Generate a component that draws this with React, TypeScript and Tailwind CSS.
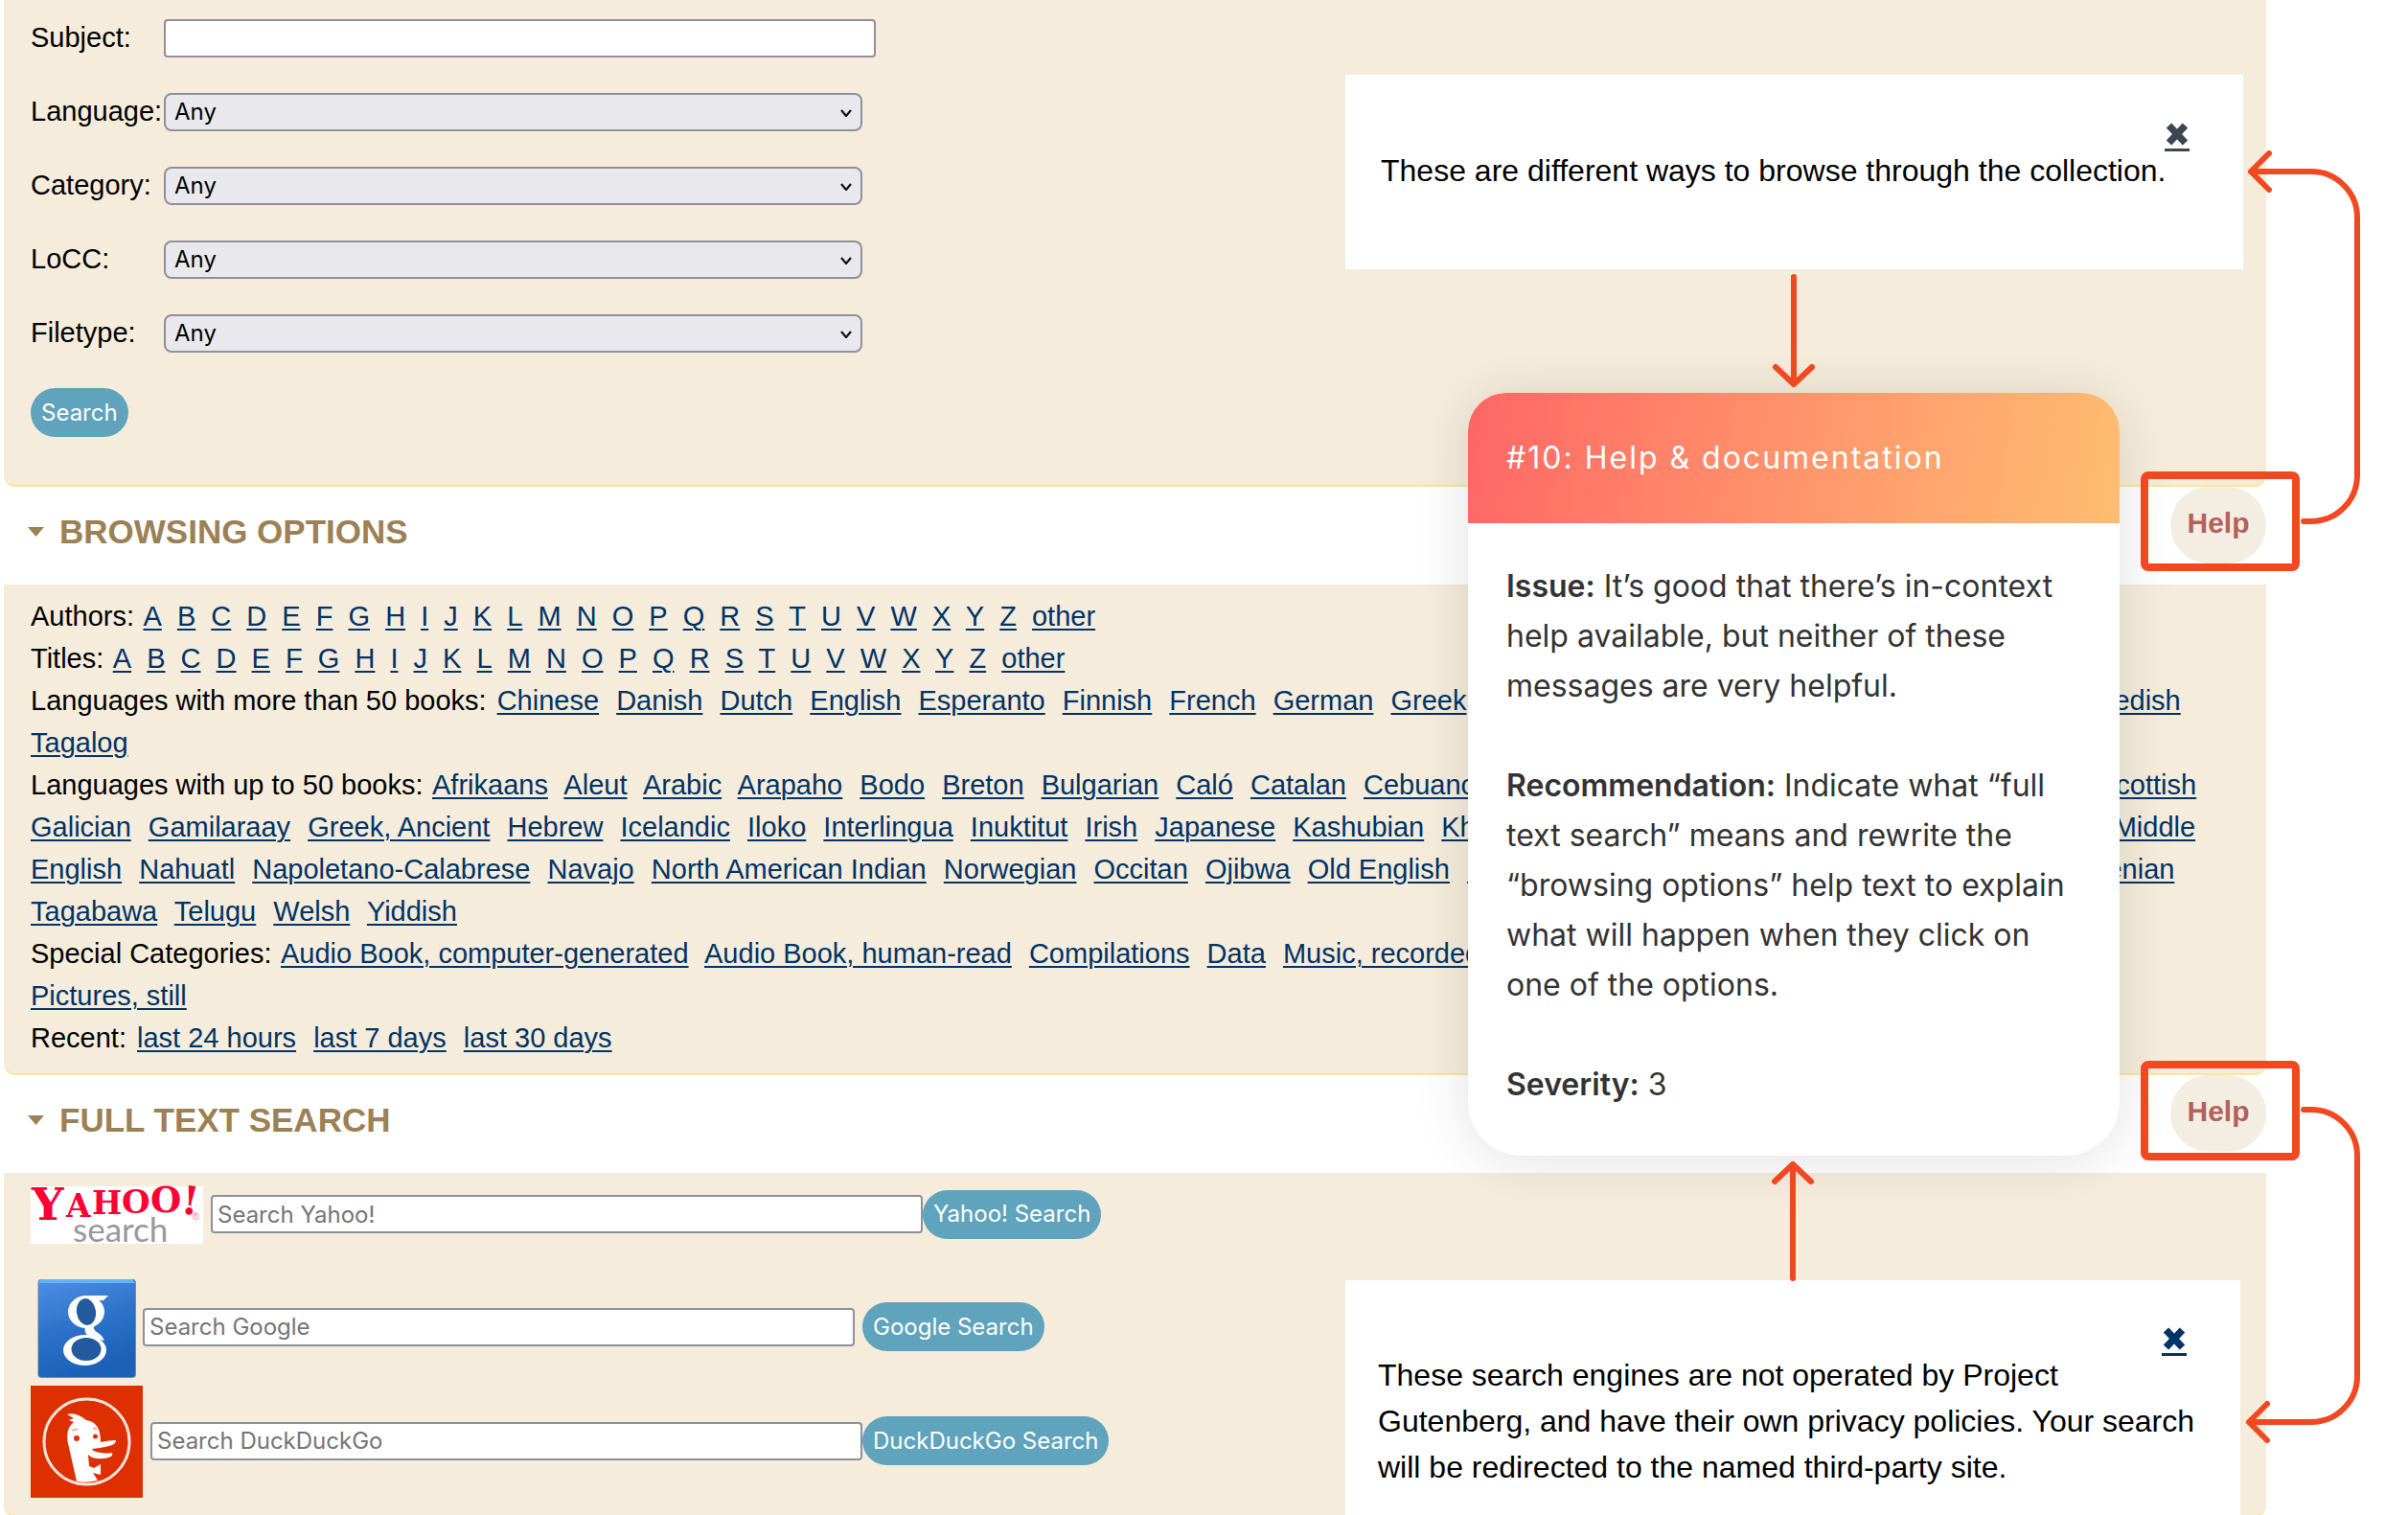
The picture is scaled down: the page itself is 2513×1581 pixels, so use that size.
import React from "react";

const FORM_FIELDS = ["Language", "Category", "LoCC", "Filetype"];
const LETTERS = [..."ABCDEFGHIJKLMNOPQRSTUVWXYZ", "other"];

const BROWSE_ROWS: { label: string; spacing: string; items: string[] }[] = [
  { label: "Authors:", spacing: "mr-2", items: LETTERS },
  { label: "Titles:", spacing: "mr-2", items: LETTERS },
  {
    label: "Languages with more than 50 books:",
    spacing: "mr-[10px]",
    items: ["Chinese", "Danish", "Dutch", "English", "Esperanto", "Finnish", "French", "German", "Greek", "Hungarian", "Italian", "Latin", "Portuguese", "Spanish", "Swedish", "Tagalog"],
  },
  {
    label: "Languages with up to 50 books:",
    spacing: "mr-[10px]",
    items: [
      "Afrikaans", "Aleut", "Arabic", "Arapaho", "Bodo", "Breton", "Bulgarian", "Caló", "Catalan", "Cebuano", "Czech", "Estonian", "Farsi", "Frisian", "Friulian", "Gaelic, Scottish",
      "Galician", "Gamilaraay", "Greek, Ancient", "Hebrew", "Icelandic", "Iloko", "Interlingua", "Inuktitut", "Irish", "Japanese", "Kashubian", "Khasi", "Korean", "Lithuanian", "Maori", "Mayan Languages", "Middle English",
      "Nahuatl", "Napoletano-Calabrese", "Navajo", "North American Indian", "Norwegian", "Occitan", "Ojibwa", "Old English", "Polish", "Romanian", "Russian", "Sanskrit", "Serbian", "Slovenian",
      "Tagabawa", "Telugu", "Welsh", "Yiddish",
    ],
  },
  {
    label: "Special Categories:",
    spacing: "mr-[10px]",
    items: ["Audio Book, computer-generated", "Audio Book, human-read", "Compilations", "Data", "Music, recorded", "Music, sheet", "Other recordings", "Pictures, moving", "Pictures,\u00a0still"],
  },
  { label: "Recent:", spacing: "mr-[10px]", items: ["last 24 hours", "last 7 days", "last 30 days"] },
];

function PillButton({ children }: { children: React.ReactNode }) {
  return (
    <button type="submit" className="block h-[51px] shrink-0 rounded-full bg-[#60a3bc] px-[11px] font-[Inter,sans-serif] text-2xl text-white">
      {children}
    </button>
  );
}

function SectionHeader({ title }: { title: string }) {
  return (
    <div className="flex h-[102px] items-center pl-[25px]">
      <div className="flex items-center pb-2">
        <svg className="mr-4 h-[10px] w-[17px]" viewBox="0 0 17 10" aria-hidden="true">
          <path d="M0 0h17L8.500 10z" fill="#9c8154" />
        </svg>
        <h2 className="text-[35px] leading-10 font-bold text-[#9c8154]">{title}</h2>
      </div>
      <button type="button" className="ml-auto h-20 w-[100px] self-start rounded-[40px] bg-[#f4ede1] pb-[6px] text-[30px] font-bold text-[#b5615b]">
        Help
      </button>
    </div>
  );
}

function YahooLogo() {
  return (
    <svg className="h-[60px] w-[180px] shrink-0 overflow-visible bg-white" viewBox="0 0 180 60" role="img" aria-label="Yahoo! Search">
      <g fontFamily="DejaVu Serif, serif" fontWeight="bold" fill="#ff0033">
        <text x="1" y="35" fontSize="47">Y</text>
        <text x="37" y="32" fontSize="33">A</text>
        <text x="64" y="29" fontSize="33">H</text>
        <text x="95" y="28" fontSize="34">O</text>
        <text x="125" y="27" fontSize="37">O</text>
        <text x="157" y="29" fontSize="41" transform="rotate(7 164 20)">!</text>
      </g>
      <text x="168" y="35" fontSize="11" fill="#ff8090" fontFamily="Liberation Sans, sans-serif">®</text>
      <text x="44" y="58" fontSize="35" fill="#999" fontFamily="Lato, sans-serif">search</text>
    </svg>
  );
}

function GoogleLogo() {
  return (
    <svg className="h-[117px] w-[117px] shrink-0" viewBox="0 0 117 117" role="img" aria-label="Google">
      <defs>
        <linearGradient id="tile" x1="0" y1="0" x2="0.300" y2="1">
          <stop offset="0" stopColor="#4f8fe6" />
          <stop offset="0.500" stopColor="#2f74cc" />
          <stop offset="1" stopColor="#1c61b8" />
        </linearGradient>
      </defs>
      <rect x="7.500" y="8" width="102.500" height="103" rx="4" fill="#7f8b96" />
      <rect x="8" y="8" width="101" height="102" rx="3" fill="url(#tile)" />
      <path d="M11 8h95l3 4H8z" fill="#62b4f5" />
      <g fill="#fff">
        <ellipse cx="58" cy="42" rx="19" ry="17" />
        <path d="M60 25h21l-5 5h-8z" />
        <path d="M57 56c-1 6 0 9 4 12l16 4c-3-9-13-9-11-15z" />
        <ellipse cx="56.500" cy="82" rx="22.500" ry="16" />
      </g>
      <g fill="#235a9e">
        <ellipse cx="58" cy="42" rx="10" ry="14" transform="rotate(-8 58 42)" />
        <ellipse cx="58" cy="81" rx="15.500" ry="12" />
      </g>
    </svg>
  );
}

function DuckLogo() {
  return (
    <svg className="h-[117px] w-[117px] shrink-0" viewBox="0 0 117 117" role="img" aria-label="DuckDuckGo">
      <rect width="117" height="117" fill="#de2f00" />
      <circle cx="58.500" cy="58.500" r="44.500" fill="none" stroke="#fde5de" strokeWidth="3" />
      <path
        d="M38 30q9-3 20 6 7 1 10 5 5 5 5 18 9-2 16-2 0 2-2 4-5 3-23 5 1 3 10 4 6 1 11 0 1 2-1 4-9 4-20 1l-4-3 1 12 5 2 7-4v11l-8-2 5 8q-12 3-22 1L38.500 58q-1.500-13 4.500-18l2-2-5-2 5-2z"
        fill="#fff"
      />
      <circle cx="48" cy="55" r="3" fill="#de2f00" />
      <circle cx="67.500" cy="53" r="2.500" fill="#de2f00" />
      <path d="M43 47q3-2 6-1M65 45q2-1 4 0" fill="none" stroke="#f0a088" strokeWidth="1.500" />
    </svg>
  );
}

const ENGINES = [
  { name: "Yahoo!", logo: <YahooLogo />, row: "h-[74px] mb-[22px] gap-2", gap: "" },
  { name: "Google", logo: <GoogleLogo />, row: "h-[117px] mb-[2px]", gap: "ml-2" },
  { name: "DuckDuckGo", logo: <DuckLogo />, row: "h-[117px] gap-2", gap: "" },
];

function Popup({ className, closeClass, children }: { className: string; closeClass: string; children: React.ReactNode }) {
  return (
    <div role="note" className={`absolute bg-white text-[32px] leading-12 ${className}`}>
      <div className="flex h-[26px] items-start justify-end">
        <a href="#close" aria-label="Close" className={`w-[26px] border-b-[3px] pb-[3px] ${closeClass}`}>
          <svg className="h-6 w-[26px]" viewBox="0 0 26 24" aria-hidden="true">
            <path d="M4.500 3l17 18M21.500 3l-17 18" stroke="currentColor" strokeWidth="7.500" />
          </svg>
        </a>
      </div>
      <p>{children}</p>
    </div>
  );
}

const ARROW = "pointer-events-none absolute overflow-visible fill-none stroke-[#f24822] stroke-[6] [stroke-linecap:round] [stroke-linejoin:round]";

export default function App() {
  return (
    <div className="relative h-screen overflow-hidden bg-white font-['Liberation_Sans',Arial,sans-serif] text-[29px] text-black">
      <main className="mr-[148px] ml-1">
        <form className="rounded-b-xl border-b-2 border-[#f9e79b] bg-[#f5ecdb] pt-5 pb-[50px] pl-7" onSubmit={(e) => e.preventDefault()}>
          <div className="mb-[37px] flex h-10 items-center">
            <label htmlFor="subject" className="w-[139px] shrink-0">Subject:</label>
            <input id="subject" type="text" className="h-10 w-[743px] rounded border-2 border-[#8f8f9d] bg-white" />
          </div>
          {FORM_FIELDS.map((f) => (
            <div key={f} className="mb-[37px] flex h-10 items-center">
              <label htmlFor={f} className="w-[139px] shrink-0">{f}:</label>
              <div className="relative">
                <select id={f} className="block h-10 w-[729px] appearance-none rounded-lg border-2 border-[#8f8f9d] bg-[#e9e9ed] px-[9px] font-[Inter,sans-serif] text-2xl">
                  <option>Any</option>
                </select>
                <svg className="pointer-events-none absolute top-[17px] right-[11px] h-2 w-3" viewBox="0 0 12 8" aria-hidden="true">
                  <path d="M1 1l5 6 5-6" fill="none" stroke="#111" strokeWidth="2.200" />
                </svg>
              </div>
            </div>
          ))}
          <PillButton>Search</PillButton>
        </form>

        <SectionHeader title="BROWSING OPTIONS" />
        <section className="rounded-b-xl border-b-2 border-[#f9e79b] bg-[#f5ecdb] pt-[11px] pr-7 pb-[15px] pl-7 leading-11">
          {BROWSE_ROWS.map((row) => (
            <p key={row.label}>
              <span className="mr-[3px]">{row.label}</span>{" "}
              {row.items.map((item) => (
                <React.Fragment key={item}>
                  <a href="#browse" className={`${row.spacing} text-[#003366] underline decoration-2 underline-offset-3`}>{item}</a>{" "}
                </React.Fragment>
              ))}
            </p>
          ))}
        </section>

        <SectionHeader title="FULL TEXT SEARCH" />
        <section className="rounded-b-xl border-b-2 border-[#f9e79b] bg-[#f5ecdb] pt-[7px] pb-[18px] pl-7">
          {ENGINES.map((e) => (
            <form key={e.name} className={`flex items-center ${e.row}`} onSubmit={(ev) => ev.preventDefault()}>
              {e.logo}
              <div className="flex items-center pb-[2px]">
                <input
                  type="text"
                  aria-label={`Search ${e.name}`}
                  placeholder={`Search ${e.name}`}
                  className="h-10 w-[743px] rounded border-2 border-[#8f8f9d] bg-white px-[5px] font-[Inter,sans-serif] text-2xl placeholder:text-[#757575]"
                />
                <div className={e.gap}>
                  <PillButton>{e.name} Search</PillButton>
                </div>
              </div>
            </form>
          ))}
        </section>
      </main>

      <Popup className="top-[78px] right-[172px] h-[203px] w-[937px] px-[37px] pt-[50px]" closeClass="mr-[19px] text-[#3b4650]">
        These are different ways to browse through the collection.
      </Popup>
      <Popup className="top-[1336px] right-[175px] h-[260px] w-[934px] px-[34px] pt-[49px]" closeClass="mr-[22px] text-[#003366]">
        These search engines are not operated by Project Gutenberg, and have their own privacy policies. Your search will be redirected to the named third-party site.
      </Popup>

      <article className="absolute top-[410px] right-[301px] w-[680px] overflow-hidden rounded-t-[40px] rounded-b-[56px] bg-white font-[Inter,sans-serif] text-[32px] leading-[52px] text-[#333] shadow-[0_4px_60px_rgba(0,0,0,0.12)]">
        <h3 className="flex h-[136px] items-center bg-linear-100 from-[#ff6565] to-[#ffbd71] px-10 tracking-[2px] text-white">#10: Help &amp; documentation</h3>
        <div className="flex flex-col gap-[52px] px-10 pt-10 pb-12">
          <p><strong className="font-semibold">Issue:</strong> It’s good that there’s in-context help available, but neither of these messages are very helpful.</p>
          <p><strong className="font-semibold">Recommendation:</strong> Indicate what “full text search” means and rewrite the “browsing options” help text to explain what will happen when they click on one of the options.</p>
          <p><strong className="font-semibold">Severity:</strong> 3</p>
        </div>
      </article>

      <div className="absolute top-[492px] right-[113px] h-[104px] w-[166px] rounded-lg border-8 border-[#f24822]" />
      <div className="absolute top-[1107px] right-[113px] h-[104px] w-[166px] rounded-lg border-8 border-[#f24822]" />

      <svg className={`${ARROW} top-[289px] right-[621px] h-[112px] w-10`} viewBox="0 0 40 112" aria-hidden="true">
        <path d="M20 0v112M1 94l19 18 19-18" />
      </svg>
      <svg className={`${ARROW} top-[1215px] right-[622px] h-[119px] w-10`} viewBox="0 0 40 119" aria-hidden="true">
        <path d="M20 119V0M1 18L20 0l19 18" />
      </svg>
      <svg className={`${ARROW} top-[160px] right-[53px] h-[384px] w-[111px]`} viewBox="0 0 111 384" aria-hidden="true">
        <path d="M55 384h8a48 48 0 0 0 48-48V67a48 48 0 0 0-48-48H0M19 0L0 19l19 19" />
      </svg>
      <svg className={`${ARROW} top-[1158px] right-[53px] h-[345px] w-[113px]`} viewBox="0 0 113 345" aria-hidden="true">
        <path d="M57 0h8a48 48 0 0 1 48 48V278a48 48 0 0 1-48 48H0M19 307L0 326l19 19" />
      </svg>
    </div>
  );
}
